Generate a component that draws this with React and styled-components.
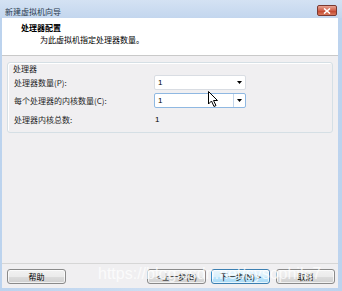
import React from "react";
import styled, { createGlobalStyle } from "styled-components";

const Global = createGlobalStyle`
  html, body { margin: 0; padding: 0; background: #fff; }
  body { font-family: "Noto Sans CJK SC", "Noto Sans", sans-serif; }
`;

const Window = styled.div`
  position: relative;
  width: 342px;
  height: 291px;
  box-sizing: border-box;
  background: linear-gradient(90deg, #bcd3ee 0%, #cfdff2 50%, #bcd3ee 100%);
  display: flex;
  flex-direction: column;
  padding: 0 4px 3px 2px;
  overflow: hidden;
`;

const TitleBar = styled.div`
  height: 18px;
  display: flex;
  justify-content: space-between;
  align-items: flex-start;
  margin: 0 -4px 0 -2px;
  background: linear-gradient(#d4e2f3, #c3d6ee);
`;

const TitleText = styled.div`
  font-size: 8px;
  line-height: 11px;
  padding: 6px 0 0 5px;
  color: #2a3a4e;
`;

const CloseBtn = styled.div`
  width: 20px;
  height: 11px;
  margin: 5px 5px 0 0;
  box-sizing: border-box;
  border: 1px solid #7a3a32;
  border-radius: 2px;
  background: linear-gradient(#e8a493, #d0604a 50%, #c2452d 55%, #d97a5e);
  display: flex;
  align-items: center;
  justify-content: center;
`;

const Inner = styled.div`
  flex: 1;
  display: flex;
  flex-direction: column;
  background: #f0eff1;
`;

const Header = styled.div`
  height: 38px;
  box-sizing: border-box;
  background: #fff;
  border-bottom: 1px solid #c9c9c9;
  padding: 4px 0 0 19px;
`;

const HeaderTitle = styled.div`
  font-size: 8px;
  line-height: 12px;
  font-weight: 700;
  color: #000;
`;

const HeaderSub = styled.div`
  font-size: 8px;
  line-height: 12px;
  color: #000;
  padding-left: 19px;
`;

const Group = styled.div`
  margin: 6px 5px 0 5px;
  height: 71px;
  box-sizing: border-box;
  border: 1px solid #d5dfe5;
  border-radius: 3px;
  box-shadow: inset 1px 1px 0 #fff;
  padding: 0 0 0 6px;
`;

const GroupLabel = styled.div`
  font-size: 8px;
  line-height: 12px;
  color: #1a1a1a;
  margin-left: -1px;
`;

const Grid = styled.div`
  display: grid;
  grid-template-columns: 140px 92px;
  grid-template-rows: 15px 15px 17px;
  row-gap: 3px;
  align-items: center;
`;

const Label = styled.div`
  font-size: 8px;
  line-height: 12px;
  color: #1e1e1e;
`;

const Value = styled.div`
  font-size: 8px;
  line-height: 12px;
  padding-left: 1px;
  font-family: "Liberation Sans", sans-serif;
`;

const Combo = styled.div`
  height: 15px;
  box-sizing: border-box;
  background: #fff;
  border: 1px solid ${(p) => (p.$focused ? "#8fb8e2" : "#d9dde3")};
  border-radius: 2px;
  display: flex;
  align-items: center;
  position: relative;
`;

const ComboText = styled.div`
  flex: 1;
  font-family: "Liberation Sans", sans-serif;
  font-size: 8px;
  padding-left: 3px;
  color: #000;
`;

const ComboArrow = styled.div`
  width: 10px;
  height: 100%;
  display: flex;
  align-items: center;
  justify-content: center;
  border-left: 1px solid ${(p) => (p.$focused ? "#c5d6ea" : "transparent")};
  margin-right: 1px;
`;

const Spacer = styled.div`
  flex: 1;
`;

const Footer = styled.div`
  border-top: 1px solid #d6d6d6;
  padding: 5px 3px 4px 5px;
  display: flex;
  align-items: center;
`;

const Button = styled.div`
  width: 59px;
  height: 15px;
  box-sizing: border-box;
  border: 1px solid ${(p) => (p.$default ? "#3c7fb1" : "#8a8a8a")};
  border-radius: 3px;
  background: ${(p) =>
    p.$default
      ? "linear-gradient(#eaf6fd, #d9f0fc 50%, #bee6fd 51%, #a7d9f5)"
      : "linear-gradient(#f2f2f2, #ebebeb 50%, #dddddd 51%, #cfcfcf)"};
  box-shadow: inset 0 0 0 1px rgba(255,255,255,0.7);
  font-size: 8px;
  line-height: 13px;
  text-align: center;
  color: #000;
  margin-left: ${(p) => p.$ml || 0}px;
`;

const Watermark = styled.div`
  position: absolute;
  left: 98px;
  top: 265px;
  font-family: "Liberation Sans", sans-serif;
  font-size: 16px;
  color: rgba(255, 255, 255, 0.75);
  white-space: nowrap;
  pointer-events: none;
`;

const Cursor = styled.svg`
  position: absolute;
  left: 208px;
  top: 91px;
`;

const Arrow = () => (
  <svg width="5" height="3" viewBox="0 0 5 3">
    <path d="M0 0h5L2.5 3z" fill="#000" />
  </svg>
);

const Row = ({ label, value, focused }) => (
  <>
    <Label>{label}</Label>
    <Combo $focused={focused}>
      <ComboText>{value}</ComboText>
      <ComboArrow $focused={focused}>
        <Arrow />
      </ComboArrow>
    </Combo>
  </>
);

export default function App() {
  return (
    <>
      <Global />
      <Window>
        <TitleBar>
          <TitleText>新建虚拟机向导</TitleText>
          <CloseBtn>
            <svg width="8" height="6" viewBox="0 0 8 6">
              <path d="M1 0.5L7 5.5M7 0.5L1 5.5" stroke="#fff" strokeWidth="1.6" />
            </svg>
          </CloseBtn>
        </TitleBar>
        <Inner>
          <Header>
            <HeaderTitle>处理器配置</HeaderTitle>
            <HeaderSub>为此虚拟机指定处理器数量。</HeaderSub>
          </Header>
          <Group>
            <GroupLabel>处理器</GroupLabel>
            <Grid>
              <Row label="处理器数量(P):" value="1" />
              <Row label="每个处理器的内核数量(C):" value="1" focused />
              <Label>处理器内核总数:</Label>
              <Value>1</Value>
            </Grid>
          </Group>
          <Spacer />
          <Footer>
            <Button>帮助</Button>
            <Button $ml={81}>&lt; 上一步(B)</Button>
            <Button $default $ml={5}>下一步(N) &gt;</Button>
            <Button $ml={6}>取消</Button>
          </Footer>
        </Inner>
        <Cursor width="11" height="16" viewBox="0 0 11 16">
          <path d="M0.5 0.5V13L3.5 10L6 15.5L8 14.5L5.5 9.5H9.5Z" fill="#fff" stroke="#000" strokeWidth="1" strokeLinejoin="round" />
        </Cursor>
        <Watermark>https://blog.csdn.net/sysophila7</Watermark>
      </Window>
    </>
  );
}
